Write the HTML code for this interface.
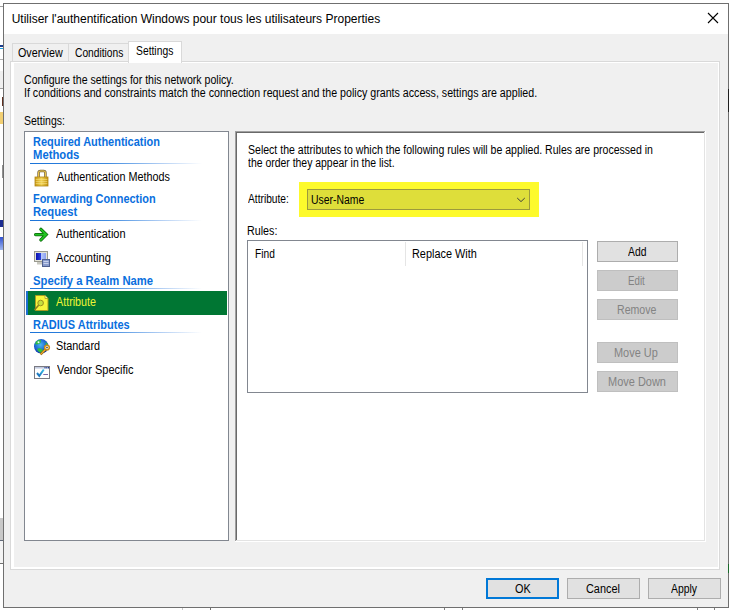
<!DOCTYPE html>
<html><head><meta charset="utf-8">
<style>
html,body{margin:0;padding:0;}
body{width:729px;height:610px;position:relative;overflow:hidden;background:#fff;font-family:"Liberation Sans",sans-serif;}
.a{position:absolute;}
.t{position:absolute;white-space:nowrap;font-size:12px;line-height:13px;color:#000;transform-origin:0 0;}
.hl{position:absolute;height:1px;background:linear-gradient(to right,#1a73d8 0%,#3d8ae0 45%,rgba(120,170,235,0.6) 75%,rgba(255,255,255,0) 100%);}
.btn{position:absolute;box-sizing:border-box;width:81px;height:21px;background:#e1e1e1;border:1px solid #adadad;}
.dis{background:#cccccc;border-color:#bfbfbf;}
.bb{position:absolute;box-sizing:border-box;width:73px;height:21px;background:#e1e1e1;border:1px solid #adadad;}
</style></head><body>
<!-- background strips -->
<div class="a" style="left:0;top:6px;width:3px;height:1px;background:#a0a0a0"></div>
<div class="a" style="left:0;top:45px;width:3px;height:2px;background:#1a3a8a"></div>
<div class="a" style="left:0;top:48px;width:3px;height:1px;background:#20a0e0"></div>
<div class="a" style="left:0;top:59px;width:3px;height:1px;background:#b0b0b0"></div>
<div class="a" style="left:0;top:71px;width:3px;height:17px;background:#f0f0f0"></div>
<div class="a" style="left:0;top:88px;width:3px;height:1px;background:#a0a0a0"></div>
<div class="a" style="left:2px;top:97px;width:1px;height:9px;background:#603020"></div>
<div class="a" style="left:0;top:112px;width:3px;height:12px;background:#f2cf72"></div>
<div class="a" style="left:2px;top:165px;width:1px;height:13px;background:#909090"></div>
<div class="a" style="left:0;top:220px;width:3px;height:7px;background:#1a2a90"></div>
<div class="a" style="left:0;top:237px;width:3px;height:13px;background:linear-gradient(#3050d0,#a0b8f0)"></div>
<div class="a" style="left:0;top:518px;width:3px;height:22px;background:#c8c8c8"></div>
<div class="a" style="left:0;top:540px;width:3px;height:1px;background:#606878"></div>
<div class="a" style="left:0;top:541px;width:3px;height:22px;background:#f4f4f4"></div>
<div class="a" style="left:0;top:563px;width:3px;height:1px;background:#707070"></div>
<div class="a" style="left:182px;top:608px;width:1px;height:2px;background:#c8c8c8"></div>
<div class="a" style="left:210px;top:608px;width:1px;height:2px;background:#707070"></div>
<div class="a" style="left:444px;top:608px;width:1px;height:2px;background:#808080"></div>
<div class="a" style="left:462px;top:608px;width:1px;height:2px;background:#808080"></div>
<div class="a" style="left:697px;top:608px;width:1px;height:2px;background:#808080"></div>
<div class="a" style="left:714px;top:608px;width:1px;height:2px;background:#808080"></div>
<!-- window -->
<div class="a" style="left:3px;top:3px;width:724px;height:603px;border:1px solid #6f6f6f;background:#f0f0f0"></div>
<div class="a" style="left:4px;top:4px;width:724px;height:30px;background:#fff"></div>
<svg class="a" style="left:707px;top:12px" width="12" height="12" viewBox="0 0 12 12"><path d="M1 1L11 11M11 1L1 11" stroke="#000" stroke-width="1.1" fill="none"/></svg>

<!-- tabs -->
<div class="a" style="left:12px;top:43px;width:116px;height:18px;border:1px solid #d9d9d9;border-bottom:none;box-sizing:content-box;background:#f0f0f0"></div>
<div class="a" style="left:68px;top:44px;width:1px;height:17px;background:#d9d9d9"></div>
<!-- panel -->
<div class="a" style="left:10px;top:61px;width:708px;height:507px;border:1px solid #d9d9d9;background:#fff"></div>
<div class="a" style="left:128px;top:41px;width:52px;height:21px;border:1px solid #d9d9d9;border-bottom:none;background:#fff"></div>
<div class="a" style="left:14px;top:63px;width:704px;height:504px;background:#f0f0f0"></div>

<!-- left list -->
<div class="a" style="left:24px;top:131px;width:203px;height:408px;border:1px solid #828790;background:#fff"></div>
<div class="hl" style="left:30px;top:163px;width:172px"></div>
<div class="hl" style="left:30px;top:220px;width:172px"></div>
<div class="hl" style="left:30px;top:288px;width:172px"></div>
<div class="a" style="left:26px;top:291px;width:201px;height:24px;background:#007633"></div>
<div class="a" style="left:26px;top:291px;width:2px;height:24px;background:#1e6fd0"></div>
<div class="hl" style="left:30px;top:332px;width:172px"></div>

<!-- icons -->
<svg class="a" style="left:0;top:0" width="729" height="610" viewBox="0 0 729 610">
 <defs>
  <linearGradient id="gold" x1="0" y1="0" x2="1" y2="0"><stop offset="0" stop-color="#c99a12"/><stop offset="0.5" stop-color="#f2d457"/><stop offset="1" stop-color="#c2920e"/></linearGradient>
  <linearGradient id="scr" x1="0" y1="0" x2="1" y2="0"><stop offset="0" stop-color="#0a10b0"/><stop offset="0.45" stop-color="#2a40d8"/><stop offset="0.55" stop-color="#b8c8f8"/><stop offset="1" stop-color="#8aa0f0"/></linearGradient>
  <radialGradient id="glb" cx="0.45" cy="0.4" r="0.6"><stop offset="0" stop-color="#4ab8f0"/><stop offset="0.7" stop-color="#1a60d0"/><stop offset="1" stop-color="#1030a0"/></radialGradient>
 </defs>
 <!-- lock -->
 <path d="M38.6 177.5V172.8Q38.6 171 40.4 171H43.6Q45.4 171 45.4 172.8V177.5" fill="none" stroke="#7c6a44" stroke-width="2.6"/>
 <path d="M38.6 177.5V172.8Q38.6 171 40.4 171H43.6Q45.4 171 45.4 172.8V177.5" fill="none" stroke="#efc94a" stroke-width="1.1"/>
 <rect x="35" y="177" width="13" height="9" fill="url(#gold)"/>
 <path d="M35.5 179.5H47.5M35.5 181.5H47.5M35.5 183.5H47.5" stroke="#f8e48a" stroke-width="0.7" opacity="0.8"/>
 <rect x="35" y="177" width="13" height="9" fill="none" stroke="#b08414" stroke-width="0.8"/>
 <!-- arrow -->
 <path d="M35.6 234.6H46.2M40.9 229.3L46.2 234.6L40.9 239.9" fill="none" stroke="#0d650d" stroke-width="3.3" stroke-linecap="round" stroke-linejoin="miter"/>
 <path d="M35.6 234.6H46.2M40.9 229.3L46.2 234.6L40.9 239.9" fill="none" stroke="#22c422" stroke-width="1.9" stroke-linecap="round"/>
 <!-- accounting -->
 <rect x="34.5" y="251.5" width="13" height="10" fill="#e4e4d8" stroke="#9a9a90" stroke-width="1"/>
 <rect x="36" y="253" width="10" height="7" fill="url(#scr)"/>
 <rect x="37" y="262" width="5" height="2.5" fill="#c8c8c0"/>
 <rect x="42.5" y="259.5" width="7" height="7" fill="#8a9ccc" stroke="#50608e" stroke-width="1"/>
 <path d="M43.5 261.5H48.5M43.5 263.5H48.5" stroke="#d8e0f4" stroke-width="0.8"/>
 <!-- attribute doc -->
 <path d="M35.5 295.5H45L48 298.5V310.5H35.5Z" fill="#f6f63c" stroke="#a89a20" stroke-width="1"/>
 <path d="M45 295.5V298.5H48" fill="#fafab0" stroke="#a89a20" stroke-width="0.8"/>
 <circle cx="40.6" cy="303" r="2.8" fill="#c4e040" stroke="#9a9020" stroke-width="1"/>
 <path d="M38.6 305.2L34.4 310" stroke="#8a7a20" stroke-width="1.5"/>
 <!-- globe -->
 <circle cx="41.2" cy="346.3" r="7.2" fill="url(#glb)"/>
 <path d="M36 341.5Q38 339.5 41 340L40.5 343Q38 344.5 35.2 344.5Z" fill="#30c040"/>
 <path d="M37.5 348.5Q41 347.5 43.5 350.5L42 353Q39 352.5 37.5 350.5Z" fill="#30c040"/>
 <path d="M45.5 342Q47.8 343 48 345.5L46 346Z" fill="#30c040"/>
 <circle cx="38.5" cy="342.2" r="1" fill="#e8f4ff"/>
 <path d="M45.8 349L40.6 354.4" stroke="#8a5a10" stroke-width="2.4"/>
 <path d="M45.8 349L40.6 354.4" stroke="#f0b030" stroke-width="1.2"/>
 <circle cx="47" cy="347.6" r="2.4" fill="#fff4c0" stroke="#c88a18" stroke-width="1.4"/>
 <circle cx="47" cy="347.6" r="0.8" fill="#203070"/>
 <!-- vendor -->
 <rect x="34.5" y="366.5" width="15" height="12" fill="#fff" stroke="#7a7a82" stroke-width="1"/>
 <rect x="35" y="367" width="14" height="1.6" fill="#c4cce0"/>
 <rect x="44.5" y="367" width="1" height="1.4" fill="#203a90"/><rect x="46.3" y="367" width="1" height="1.4" fill="#203a90"/><rect x="48" y="367" width="1" height="1.4" fill="#203a90"/>
 <linearGradient id="chk" x1="0" y1="1" x2="1" y2="0"><stop offset="0" stop-color="#1a6ab8"/><stop offset="1" stop-color="#38c0e8"/></linearGradient><path d="M37 373L39.3 375.8L43.8 369.5" fill="none" stroke="url(#chk)" stroke-width="2"/>
 <path d="M43.3 374.5H48" stroke="#6a5aa0" stroke-width="0.9"/>
</svg>

<!-- right panel -->
<div class="a" style="left:235px;top:131px;width:471px;height:411px;background:#fff"></div>
<div class="a" style="left:235px;top:131px;width:470px;height:1px;background:#a0a0a0"></div>
<div class="a" style="left:235px;top:131px;width:1px;height:410px;background:#a0a0a0"></div>
<div class="a" style="left:236px;top:132px;width:468px;height:1px;background:#696969"></div>
<div class="a" style="left:236px;top:132px;width:1px;height:408px;background:#696969"></div>
<div class="a" style="left:236px;top:540px;width:469px;height:1px;background:#e3e3e3"></div>
<div class="a" style="left:704px;top:132px;width:1px;height:409px;background:#e3e3e3"></div>

<div class="a" style="left:299px;top:182px;width:240px;height:35px;background:#fdfa2c"></div>
<div class="a" style="left:307px;top:189px;width:221px;height:19px;border:1px solid #9c9a3c;background:#dede3a"></div>
<svg class="a" style="left:516px;top:196px" width="10" height="7" viewBox="0 0 10 7"><path d="M1.2 2L5 5.6L8.8 2" stroke="#3a3a3a" stroke-width="0.95" fill="none"/></svg>
<div class="a" style="left:247px;top:240px;width:339px;height:151px;border:1px solid #828790;background:#fff"></div>
<div class="a" style="left:405px;top:242px;width:1px;height:24px;background:#e5e5e5"></div>
<div class="a" style="left:582px;top:242px;width:1px;height:24px;background:#e5e5e5"></div>

<div class="btn" style="left:597px;top:241px;"></div>
<div class="btn dis" style="left:597px;top:270px;"></div>
<div class="btn dis" style="left:597px;top:299px;"></div>
<div class="btn dis" style="left:597px;top:342px;"></div>
<div class="btn dis" style="left:597px;top:371px;"></div>

<div class="bb" style="left:486px;top:578px;border:2px solid #0078d7;"></div>
<div class="bb" style="left:567px;top:578px;"></div>
<div class="bb" style="left:648px;top:578px;"></div>
<div class="a" style="left:728px;top:89px;width:1px;height:23px;background:#202020"></div>
<div class="a" style="left:728px;top:564px;width:1px;height:9px;background:#1a6a2a"></div>
<div class="t" style="left:11.70px;top:12px;line-height:15px;">Utiliser l'authentification Windows pour tous les utilisateurs Properties</div>
<div class="t" style="left:17.60px;top:46px;transform:scaleX(0.8940);line-height:15px;">Overview</div>
<div class="t" style="left:74.80px;top:46px;transform:scaleX(0.8526);line-height:15px;">Conditions</div>
<div class="t" style="left:136.30px;top:44px;transform:scaleX(0.8605);line-height:15px;">Settings</div>
<div class="t" style="left:24.00px;top:74px;transform:scaleX(0.8819);">Configure the settings for this network policy.</div>
<div class="t" style="left:23.81px;top:87px;transform:scaleX(0.8873);">If conditions and constraints match the connection request and the policy grants access, settings are applied.</div>
<div class="t" style="left:24.10px;top:115px;transform:scaleX(0.8761);">Settings:</div>
<div class="t" style="left:33.20px;top:136px;transform:scaleX(0.9137);font-weight:bold;color:#0a6fde;">Required Authentication</div>
<div class="t" style="left:33.00px;top:149px;transform:scaleX(0.9388);font-weight:bold;color:#0a6fde;">Methods</div>
<div class="t" style="left:56.50px;top:171px;transform:scaleX(0.9008);">Authentication Methods</div>
<div class="t" style="left:33.00px;top:193px;transform:scaleX(0.9104);font-weight:bold;color:#0a6fde;">Forwarding Connection</div>
<div class="t" style="left:33.00px;top:206px;transform:scaleX(0.9333);font-weight:bold;color:#0a6fde;">Request</div>
<div class="t" style="left:56.00px;top:228px;transform:scaleX(0.9145);">Authentication</div>
<div class="t" style="left:56.00px;top:252px;transform:scaleX(0.9254);">Accounting</div>
<div class="t" style="left:32.80px;top:275px;transform:scaleX(0.9375);font-weight:bold;color:#0a6fde;">Specify a Realm Name</div>
<div class="t" style="left:56.40px;top:296px;transform:scaleX(0.8956);color:#f0f535;">Attribute</div>
<div class="t" style="left:33.20px;top:319px;transform:scaleX(0.9151);font-weight:bold;color:#0a6fde;">RADIUS Attributes</div>
<div class="t" style="left:56.30px;top:340px;transform:scaleX(0.9042);">Standard</div>
<div class="t" style="left:56.60px;top:364px;transform:scaleX(0.9167);">Vendor Specific</div>
<div class="t" style="left:247.70px;top:144px;transform:scaleX(0.8785);">Select the attributes to which the following rules will be applied. Rules are processed in</div>
<div class="t" style="left:247.70px;top:157px;transform:scaleX(0.8690);">the order they appear in the list.</div>
<div class="t" style="left:247.70px;top:193px;transform:scaleX(0.8511);">Attribute:</div>
<div class="t" style="left:310.63px;top:194px;transform:scaleX(0.8667);">User-Name</div>
<div class="t" style="left:246.81px;top:225px;transform:scaleX(0.8938);">Rules:</div>
<div class="t" style="left:254.55px;top:248px;transform:scaleX(0.8500);">Find</div>
<div class="t" style="left:411.59px;top:248px;transform:scaleX(0.9086);">Replace With</div>
<div class="t" style="left:628.10px;top:246px;transform:scaleX(0.8619);">Add</div>
<div class="t" style="left:627.89px;top:275px;transform:scaleX(0.8100);color:#838383;">Edit</div>
<div class="t" style="left:616.62px;top:304px;transform:scaleX(0.8818);color:#838383;">Remove</div>
<div class="t" style="left:614.49px;top:347px;transform:scaleX(0.9106);color:#838383;">Move Up</div>
<div class="t" style="left:607.59px;top:376px;transform:scaleX(0.9145);color:#838383;">Move Down</div>
<div class="t" style="left:514.60px;top:583px;transform:scaleX(0.9059);">OK</div>
<div class="t" style="left:586.00px;top:583px;transform:scaleX(0.9081);">Cancel</div>
<div class="t" style="left:671.00px;top:583px;transform:scaleX(0.8667);">Apply</div>
</body></html>
